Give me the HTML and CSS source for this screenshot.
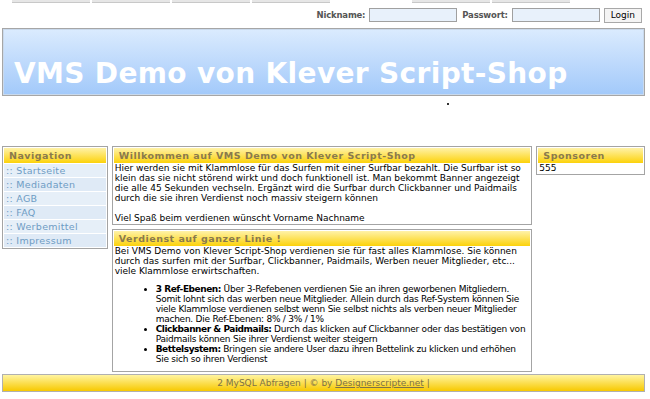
FILE: index.html
```html
<!DOCTYPE html>
<html lang="de">
<head>
<meta charset="utf-8">
<title>VMS Demo von Klever Script-Shop</title>
<link rel="stylesheet" href="styles.css">
</head>
<body>

<div class="tabs"><span></span><span></span><span></span><span></span><span class="gap"></span><span></span><span></span></div>

<form class="login">
  <label>Nickname:</label> <input type="text">
  <label>Passwort:</label> <input type="password">
  <button type="button">Login</button>
</form>

<div class="head">
  <h1>VMS Demo von Klever Script-Shop</h1>
</div>
<div class="dotrow"><span class="dot"></span></div>

<div class="cols">
  <div class="left">
    <div class="box">
      <div class="title">Navigation</div>
      <ul class="nav">
        <li><a href="#">:: Startseite</a></li>
        <li><a href="#">:: Mediadaten</a></li>
        <li><a href="#">:: AGB</a></li>
        <li><a href="#">:: FAQ</a></li>
        <li><a href="#">:: Werbemittel</a></li>
        <li><a href="#">:: Impressum</a></li>
      </ul>
    </div>
  </div>

  <div class="main">
    <div class="box">
      <div class="title">Willkommen auf VMS Demo von Klever Script-Shop</div>
      <div class="text">
        Hier werden sie mit Klammlose für das Surfen mit einer Surfbar bezahlt. Die Surfbar ist so klein das sie nicht störend wirkt und doch funktionell ist. Man bekommt Banner angezeigt die alle 45 Sekunden vechseln. Ergänzt wird die Surfbar durch Clickbanner und Paidmails durch die sie ihren Verdienst noch massiv steigern können<br><br>
        Viel Spaß beim verdienen wünscht Vorname Nachname
      </div>
    </div>

    <div class="box">
      <div class="title">Verdienst auf ganzer Linie !</div>
      <div class="text">
        Bei VMS Demo von Klever Script-Shop verdienen sie für fast alles Klammlose. Sie können durch das surfen mit der Surfbar, Clickbanner, Paidmails, Werben neuer Mitglieder, etc... viele Klammlose erwirtschaften.
        <ul class="list">
          <li><b>3 Ref-Ebenen:</b> Über 3-Refebenen verdienen Sie an ihren geworbenen Mitgliedern. Somit lohnt sich das werben neue Mitglieder. Allein durch das Ref-System können Sie viele Klammlose verdienen selbst wenn Sie selbst nichts als verben neuer Mitglieder machen. Die Ref-Ebenen: 8% / 3% / 1%</li>
          <li><b>Clickbanner &amp; Paidmails:</b> Durch das klicken auf Clickbanner oder das bestätigen von Paidmails können Sie ihrer Verdienst weiter steigern</li>
          <li><b>Bettelsystem:</b> Bringen sie andere User dazu ihren Bettelink zu klicken und erhöhen Sie sich so ihren Verdienst</li>
        </ul>
      </div>
    </div>
  </div>

  <div class="right">
    <div class="box">
      <div class="title">Sponsoren</div>
      <div class="text">555</div>
    </div>
  </div>
</div>

<div class="foot">2 MySQL Abfragen | © by <a href="#">Designerscripte.net</a> |</div>

</body>
</html>
```

FILE: styles.css
```css
body { margin: 0; padding: 0 5px 0 2px; background: #fff; font-family: "DejaVu Sans", Verdana, sans-serif; font-size: 9px; color: #000; }

.tabs { display: flex; height: 3px; gap: 2px; padding-left: 10px; }
.tabs span { width: 78px; background: #e6e6e6; border-bottom: 1px solid #c8c8c8; }
.tabs span.gap { width: 78px; background: none; border: none; }

.login { display: flex; justify-content: flex-end; align-items: center; gap: 4px; height: 14px; margin: 5px 3px 0 0; font-weight: bold; font-size: 8.5px; letter-spacing: -0.2px; color: #555; }
.login label { margin-left: 1px; }
.login input { width: 86px; height: 12px; padding: 0; border: 1px solid #a0a0a0; background: #e8f1fb; }
.login button { height: 15px; padding: 0 6px; font: inherit; font-weight: normal; font-size: 9px; color: #000; background: #f4f4f4; border: 1px solid #a8a8a8; }

.head { margin-top: 6px; height: 66px; border: 1px solid #a6a6a6; box-shadow: inset 0 0 0 1px #c9d9ec; background: linear-gradient(#dbebfe, #a2c9fa); display: flex; align-items: flex-end; }
.head h1 { margin: 0 0 5px 11px; color: #fff; font-size: 28px; line-height: 32px; font-weight: bold; letter-spacing: 0.35px; }

.dotrow { height: 50px; position: relative; }
.dot { position: absolute; left: 445px; top: 7px; width: 2px; height: 2px; background: #333; }

.cols { display: flex; gap: 4px; align-items: flex-start; }
.left { width: 106px; }
.main { width: 422px; display: flex; flex-direction: column; gap: 4px; }
.right { width: 109px; }

.box { border: 1px solid #a4a4a4; padding: 1px; background: #fff; }
.title { height: 15px; line-height: 15px; padding-left: 5px; background: linear-gradient(#fff2a8, #fcd20a); color: #8a7a4c; font-weight: bold; font-size: 9.5px; letter-spacing: 0.5px; }
.text { padding: 0 1px; line-height: 10px; }

.nav { list-style: none; margin: 0; padding: 0; }
.nav li { height: 13px; line-height: 13px; border-top: 1px solid #fff; background: #dfeaf6; padding-left: 2px; }
.nav li:nth-child(odd) { background: #e6eff8; }
.nav a { color: #6e9cc4; text-decoration: none; font-size: 9.5px; letter-spacing: 0.3px; }

.list { margin: 8px 0 6px 0; padding-left: 41px; letter-spacing: -0.25px; }
.list li { margin: 0; }
.list b { letter-spacing: -0.45px; }

.foot { margin-top: 2px; height: 16px; line-height: 16px; border: 1px solid #b0b0b0; background: linear-gradient(#fff4a0, #f7c900); text-align: center; color: #7e7246; }
.foot a { color: #7e7246; }
```
